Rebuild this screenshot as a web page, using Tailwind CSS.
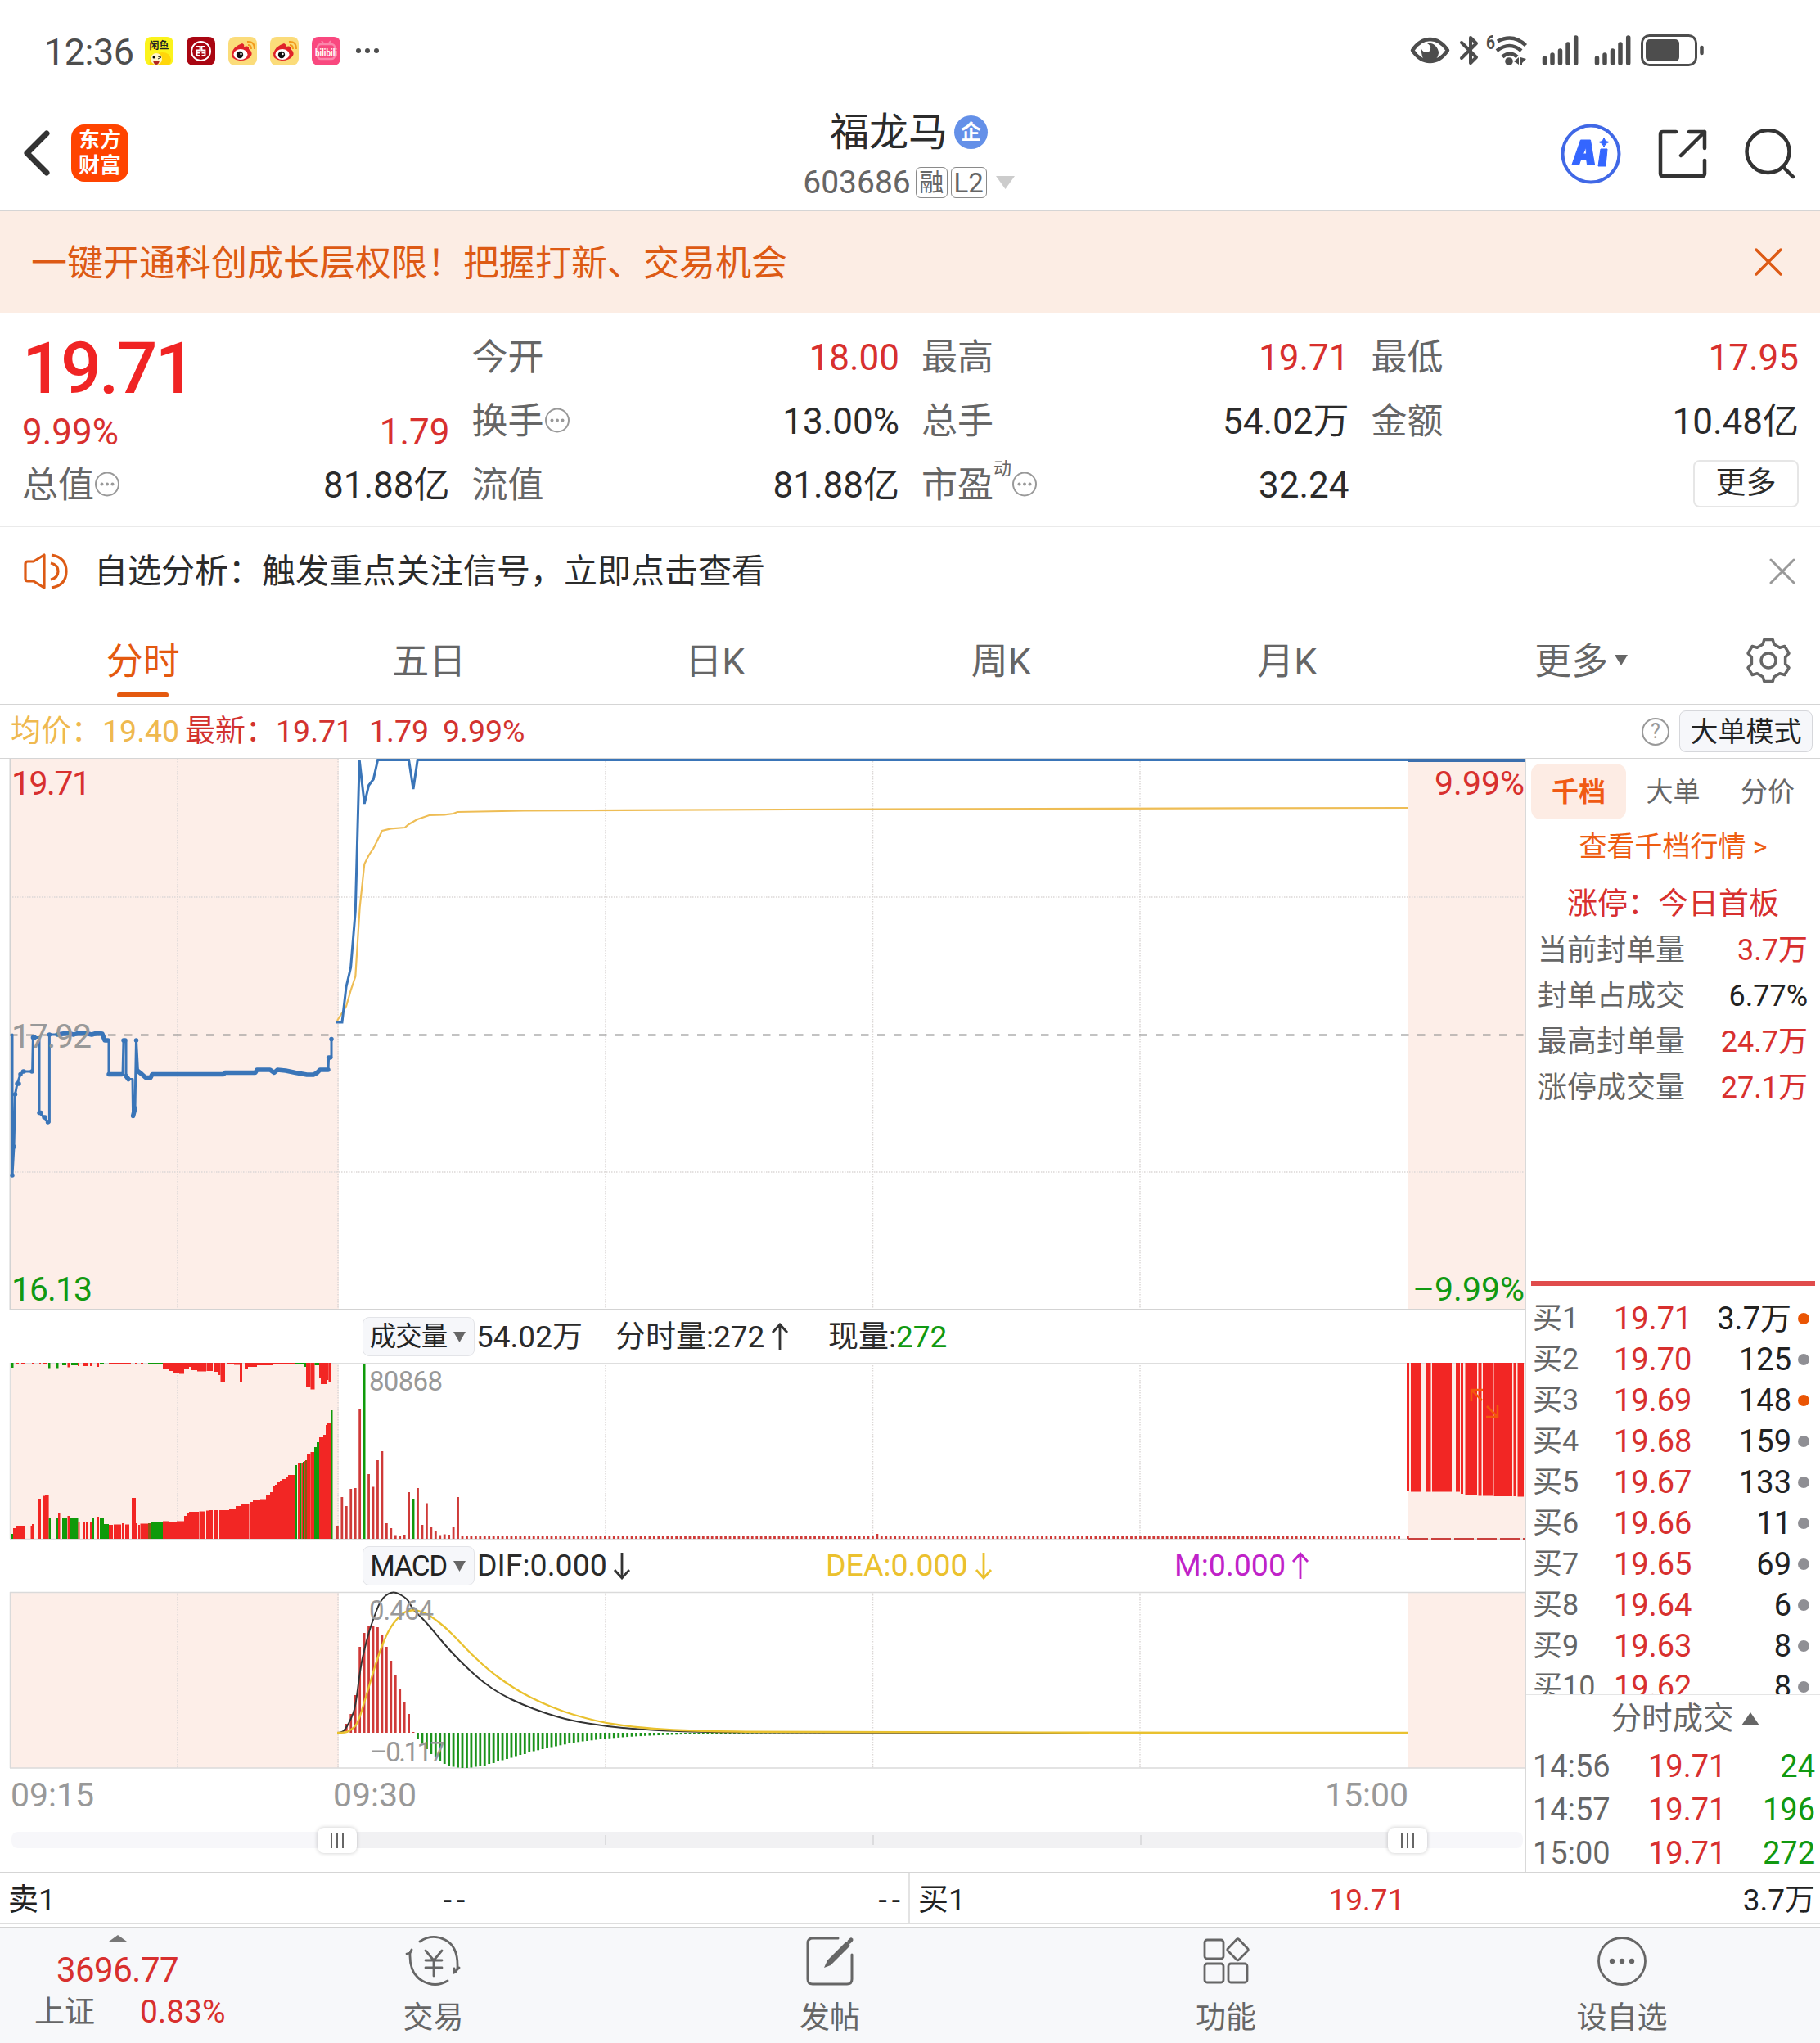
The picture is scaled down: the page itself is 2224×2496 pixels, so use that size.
<!DOCTYPE html>
<html lang="zh-CN">
<head>
    <meta charset="UTF-8">
    <meta name="viewport" content="width=device-width, initial-scale=1.0">
    <title>福龙马 603686</title>
    <script src="https://cdn.jsdelivr.net/npm/@tailwindcss/browser@4"></script>
</head>
<body class="w-[2224px] h-[2496px] overflow-hidden bg-white font-[Roboto,'Noto_Sans_CJK_SC',sans-serif] leading-none text-[#2b2b2b] whitespace-nowrap">

    <!-- 状态栏 -->
    <div class="h-[124px] flex items-center justify-between pl-[54px] pr-[142px]">
        <div class="flex items-center">
            <span class="w-[123px] pt-0.5 text-[45px] tracking-[-0.500px] text-[#4d4d4d]">12:36</span>
            <div class="flex gap-4">
                <svg class="size-[35px] overflow-visible" viewBox="0 0 35 35">
                    <rect width="35" height="35" rx="8" fill="#fbf31c"/>
                    <text x="17.5" y="15" font-size="12" font-weight="700" text-anchor="middle" fill="#222">闲鱼</text>
                    <path d="M6 35Q4 20 15 20Q30 16 32 28Q32 33 28 35Z" fill="#ffd60a"/>
                    <circle cx="14" cy="27" r="7" fill="#fff6c8"/>
                    <circle cx="11" cy="25" r="1.5"/><path d="M16 24l4 1-4 2" stroke="#222" fill="none"/>
                    <path d="M10 29h8q-1 5-4 5t-4-5z" fill="#b3261e"/>
                </svg>
                <svg class="size-[35px]" viewBox="0 0 35 35">
                    <rect width="35" height="35" rx="8" fill="#a90612"/>
                    <circle cx="17.500" cy="17.500" r="11.500" fill="none" stroke="#fff" stroke-width="2"/>
                    <path d="M12 12h4.500v4.500H12.500V23h4M23 12h-4.500v4.500h4V23h-4M12.500 19.500h4M18.500 19.500h4" fill="none" stroke="#fff" stroke-width="1.800"/>
                </svg>
                <svg class="size-[35px]" viewBox="0 0 35 35">
                    <rect width="35" height="35" rx="8" fill="#fbdc7a"/>
                    <path d="M4 20Q7 11 17 8Q20 9 19 12Q26 10 25 15Q30 18 28 23Q24 29 14 29Q3 28 4 20Z" fill="#e0222a"/>
                    <ellipse cx="15" cy="21.500" rx="8.500" ry="6.500" fill="#fff"/>
                    <circle cx="14" cy="22" r="4.200" fill="#111"/><circle cx="15.500" cy="21" r="1.200" fill="#fff"/>
                    <path d="M24 10q4 0 4 5M23 6q9-1 9 9" fill="none" stroke="#f29a1c" stroke-width="2"/>
                </svg>
                <svg class="size-[35px]" viewBox="0 0 35 35">
                    <rect width="35" height="35" rx="8" fill="#fbdc7a"/>
                    <path d="M4 20Q7 11 17 8Q20 9 19 12Q26 10 25 15Q30 18 28 23Q24 29 14 29Q3 28 4 20Z" fill="#e0222a"/>
                    <ellipse cx="15" cy="21.500" rx="8.500" ry="6.500" fill="#fff"/>
                    <circle cx="14" cy="22" r="4.200" fill="#111"/><circle cx="15.500" cy="21" r="1.200" fill="#fff"/>
                    <path d="M24 10q4 0 4 5M23 6q9-1 9 9" fill="none" stroke="#f29a1c" stroke-width="2"/>
                </svg>
                <svg class="size-[35px] overflow-visible" viewBox="0 0 35 35">
                    <rect width="35" height="35" rx="8" fill="#f9487f"/>
                    <rect x="7" y="9" width="21" height="18" rx="4" fill="none" stroke="#fb86ab" stroke-width="2.500"/>
                    <path d="M12 5l3 4M23 5l-3 4" stroke="#fb86ab" stroke-width="2"/>
                    <text x="17.500" y="24" font-size="13" font-weight="700" text-anchor="middle" textLength="27" lengthAdjust="spacingAndGlyphs" fill="#fff">bilibili</text>
                </svg>
            </div>
            <div class="ml-[19px] flex gap-[5px]">
                <i class="size-[6px] rounded-full bg-[#4d4d4d]"></i>
                <i class="size-[6px] rounded-full bg-[#4d4d4d]"></i>
                <i class="size-[6px] rounded-full bg-[#4d4d4d]"></i>
            </div>
        </div>
        <svg class="w-[358px] h-10 overflow-visible" viewBox="1724 42 358 40" fill="none" stroke="#4d4d4d">
            <path d="M1726 61.500Q1735 48 1747.500 48T1769 61.500Q1760 75 1747.500 75T1726 61.500Z" stroke-width="4.500" stroke-linejoin="round"/>
            <path d="M1744 53q6-1 10 3t4 9q-1 9-10.500 10t-10.500-11v-4q2 4 6 4t5-4-4-7z" fill="#4d4d4d" stroke="none"/>
            <path d="M1786 52l18 18-7 7V46l7 7-18 18" stroke-width="4" stroke-linejoin="round" stroke-linecap="round"/>
            <text x="1816" y="60" font-size="23" font-weight="700" textLength="11" lengthAdjust="spacingAndGlyphs" fill="#4d4d4d" stroke="none">6</text>
            <path d="M1830 50.500q19-10 34.500 5M1829 62q16-12 30 0M1836 69.500q9-8 18 0" stroke-width="4.500"/>
            <circle cx="1844" cy="75" r="4.800" fill="#4d4d4d" stroke="none"/>
            <path d="M1850 75l6-5v9zM1858 70v9h2v-2l5-5z" fill="#4d4d4d" stroke="none"/>
            <path d="M1887.500 71v6M1897 67v10M1906.500 62v15M1916 54v23M1925.700 46v31M1951.500 71v6M1961 67v10M1970.500 62v15M1980 54v23M1989.700 46v31" stroke-width="5.500" stroke-linecap="round"/>
            <rect x="2006.500" y="43.500" width="66" height="36" rx="9" stroke-width="3"/>
            <rect x="2011" y="48" width="41" height="27" rx="5" fill="#4d4d4d" stroke="none"/>
            <path d="M2079.500 58v7" stroke-width="4.500" stroke-linecap="round"/>
        </svg>
    </div>

    <!-- 标题栏 -->
    <header class="h-[134px] grid grid-cols-3 border-b border-[#d5d5d5]">
        <div class="flex items-center pl-7 pb-2">
            <svg class="w-[34px] h-[58px]" viewBox="0 0 34 58"><path d="M29 5L5 29l24 24" fill="none" stroke="#333" stroke-width="7" stroke-linecap="round" stroke-linejoin="round"/></svg>
            <div class="ml-[25px] size-[70px] rounded-[16px] bg-[#ff4400] flex flex-col items-center justify-center gap-[5px] text-white text-[26px] font-bold">
                <span>东方</span><span>财富</span>
            </div>
        </div>
        <div class="flex flex-col items-center pt-1 pr-[3px]">
            <div class="h-[64px] pt-[3px] flex items-center gap-2">
                <h1 class="text-[48px]">福龙马</h1>
                <span class="size-[41px] rounded-full bg-[#6490e8] text-white text-[25px] font-bold flex items-center justify-center">企</span>
            </div>
            <div class="h-[62px] flex items-center text-[#666]">
                <span class="text-[39px]">603686</span>
                <span class="ml-1.5 w-[39px] h-[38px] rounded-md border-[1.5px] border-[#8a8a8a] text-[30px] flex items-center justify-center">融</span>
                <span class="ml-1 w-[44px] h-[38px] rounded-md border-[1.5px] border-[#8a8a8a] text-[33px] flex items-center justify-center">L2</span>
                <svg class="ml-[11px] w-[23px] h-4" viewBox="0 0 23 16"><path d="M0 0h23L11.500 16z" fill="#ccc"/></svg>
            </div>
        </div>
        <div class="flex items-center justify-end gap-[45px] pr-[31px] pb-1.5">
            <svg class="size-[74px]" viewBox="0 0 74 74">
                <circle cx="37" cy="37" r="34.500" fill="none" stroke="#4068e6" stroke-width="4"/>
                <path d="M14 50L24.500 20h12L41.500 50h-9l-.8-6h-7l-2 6zM27.500 37h4l-.6-8z" fill="#3466ff" stroke="#3466ff" stroke-linejoin="round"/>
                <path d="M49 31h8l-2 21h-9zM53 17q1 5 6 5.500-5 1-6 6-1-5-6-6 5-.5 6-5.500z" fill="#3466ff" stroke="#3466ff" stroke-linejoin="round"/>
            </svg>
            <svg class="size-[60px]" viewBox="0 0 60 60" fill="none" stroke="#333" stroke-width="4.500" stroke-linecap="round" stroke-linejoin="round">
                <path d="M22 3H6Q3 3 3 6v48q0 3 3 3h48q3 0 3-3V38M38 3h19v20M57 3L28 32"/>
            </svg>
            <svg class="size-[62px]" viewBox="0 0 62 62" fill="none" stroke="#333" stroke-width="4.500" stroke-linecap="round">
                <circle cx="29.500" cy="28" r="26"/><path d="M48 47l12 12"/>
            </svg>
        </div>
    </header>

    <!-- 开通提示 -->
    <div class="h-[125px] flex items-center justify-between bg-[#fcede4] pl-[38px] pr-[46px] text-[#dd5a14]">
        <p class="pt-0.5 text-[44px]">一键开通科创成长层权限！把握打新、交易机会</p>
        <svg class="size-[34px] mb-0.5" viewBox="0 0 34 34"><path d="M2 2l30 30M32 2L2 32" stroke="#dd5a14" stroke-width="3.500" stroke-linecap="round"/></svg>
    </div>

    <!-- 行情数据 -->
    <section class="h-[261px] grid grid-cols-4 gap-x-[27px] pl-[27px] pr-[26px] pt-[15px] border-b border-[#eaeaea] text-[44px]">
        <div>
            <div class="h-[104px] flex items-center text-[88px] font-medium text-[#f02424] tracking-[-3px]">19.71</div>
            <div class="h-[52px] flex items-center justify-between text-[#d8302e]"><span>9.99%</span><span>1.79</span></div>
            <div class="h-[78px] flex items-center justify-between">
                <span class="flex items-center text-[#666]">总值<svg class="w-[32px] h-[32px]" viewBox="0 0 32 32"><use href="#more"/></svg></span><span>81.88亿</span>
            </div>
        </div>
        <div>
            <div class="h-[78px] flex items-center justify-between"><span class="text-[#666]">今开</span><span class="text-[#d8302e]">18.00</span></div>
            <div class="h-[78px] flex items-center justify-between">
                <span class="flex items-center text-[#666]">换手<svg class="w-[32px] h-[32px]" viewBox="0 0 32 32"><use href="#more"/></svg></span><span>13.00%</span>
            </div>
            <div class="h-[78px] flex items-center justify-between"><span class="text-[#666]">流值</span><span>81.88亿</span></div>
        </div>
        <div>
            <div class="h-[78px] flex items-center justify-between"><span class="text-[#666]">最高</span><span class="text-[#d8302e]">19.71</span></div>
            <div class="h-[78px] flex items-center justify-between"><span class="text-[#666]">总手</span><span>54.02万</span></div>
            <div class="h-[78px] flex items-center justify-between">
                <span class="flex items-center text-[#666]">市盈<span class="text-[22px] pb-10">动</span><svg class="w-[32px] h-[32px]" viewBox="0 0 32 32"><use href="#more"/></svg></span><span>32.24</span>
            </div>
        </div>
        <div>
            <div class="h-[78px] flex items-center justify-between"><span class="text-[#666]">最低</span><span class="text-[#d8302e]">17.95</span></div>
            <div class="h-[78px] flex items-center justify-between"><span class="text-[#666]">金额</span><span>10.48亿</span></div>
            <div class="h-[78px] pb-1 flex items-center justify-end">
                <button class="w-[129px] h-[58px] rounded-lg border-2 border-[#e6e6e6] text-[37px] pb-0.5">更多</button>
            </div>
        </div>
    </section>

    <!-- 自选分析 -->
    <div class="h-[109px] flex items-center border-b border-[#d5d5d5] pl-[29px] pr-[30px]">
        <svg class="w-[55px] h-[46px]" viewBox="0 0 55 46" fill="none" stroke="#dd5a14" stroke-width="3.200" stroke-linejoin="round">
            <path d="M25 3v40L12 35H5q-3 0-3-3V14q0-3 3-3h7zM34 3q18 3 18 20T34 43M33 13q9 2 9 10t-9 10"/>
        </svg>
        <p class="ml-[31px] flex-1 text-[41px]">自选分析：触发重点关注信号，立即点击查看</p>
        <svg class="size-[32px]" viewBox="0 0 32 32"><path d="M2 2l28 28M30 2L2 30" stroke="#999" stroke-width="3" stroke-linecap="round"/></svg>
    </div>

    <!-- 周期切换 -->
    <nav class="h-[108px] flex border-b border-[#d5d5d5] text-[45px] text-[#666]">
        <div class="w-[349.5px] flex flex-col items-center pt-[33px] text-[#e4590f]">分时<i class="mt-[15px] w-[63px] h-[6px] rounded-full bg-[#e4590f]"></i></div>
        <div class="w-[349.5px] text-center pt-[33px]">五日</div>
        <div class="w-[349.5px] text-center pt-[33px]">日K</div>
        <div class="w-[349.5px] text-center pt-[33px]">周K</div>
        <div class="w-[349.5px] text-center pt-[33px]">月K</div>
        <div class="w-[369.500px] flex justify-center pt-[33px] gap-2">更多<svg class="mt-[14px] w-4 h-[13px]" viewBox="0 0 16 13"><path d="M0 0h16L8 13z" fill="#666"/></svg></div>
        <svg class="mt-[26px] ml-[16px] size-[56px]" viewBox="-28 -28 56 56" fill="none" stroke="#666" stroke-width="3.500" stroke-linejoin="round">
            <path d="M-6.800-19.900L-5.200-25.500H5.200L6.800-19.900L13.800-15.800L19.800-17.500L25-8.800L20.600-4V4L25 8.800L19.800 17.500L13.800 15.800L6.800 19.900L5.200 25.500H-5.200L-6.800 19.900L-13.800 15.800L-19.800 17.500L-25 8.800L-20.600 4V-4L-25-8.800L-19.800-17.500L-13.800-15.800Z"/>
            <circle r="9"/>
        </svg>
    </nav>

    <!-- 均价 -->
    <div class="h-[66px] flex items-center border-b border-[#d5d5d5] pl-[13px] pr-[9px] text-[37.500px] text-[#d3332f]">
        <span class="w-[112px] text-[37px] text-[#efb94f]">均价：</span>
        <span class="w-[101px] text-[#efb94f]">19.40</span>
        <span class="w-[111px] text-[37px]">最新：</span>
        <span class="w-[114px]">19.71</span>
        <span class="w-[90px]">1.79</span>
        <span class="flex-1">9.99%</span>
        <span class="size-[34px] rounded-full border-[2.500px] border-[#999] text-[25px] text-[#999] flex items-center justify-center">?</span>
        <button class="ml-3 w-[163px] h-[51px] rounded-lg border-[1.500px] border-[#d6d7db] bg-[#f6f7fa] text-[34px] text-[#222]">大单模式</button>
    </div>

    <main class="h-[1361px] flex border-b border-[#d5d5d5]">
        <!-- 左侧图表 -->
        <div class="w-[1865px] border-r-2 border-[#d9d9d9]">
            <svg class="block w-[1863px] h-[674px]" viewBox="0 927 1863 674">
                <path d="M12 927h402v673H12zM1721 927h142v673h-142z" fill="#fdeee8"/>
                <path d="M217 927v673M413 927v673M740 927v673M1066.500 927v673M1393 927v673M12 1096h1851M12 1432h1851" stroke="#dcd8d6" stroke-width="1.500" stroke-dasharray="1.500 1.500"/>
                <path d="M12.500 927v673M12 1600h1851" stroke="#d3d3d3" stroke-width="2"/>
                <path d="M12 1264.500H1863" stroke="#888" stroke-width="1.800" stroke-dasharray="9.500 10.500"/>
                <g fill="none" stroke="#3a75b8" stroke-linejoin="round" stroke-linecap="round">
                    <path stroke-width="3" d="M15 1264V1436L17 1401L18.500 1337L21 1324L25 1312.500L28.500 1309H39.600L40.400 1267.500H48V1359.600L54 1365L58.500 1371H60.400V1264H126L128 1271L133 1272V1312.500H150L151 1271L154 1273V1314.500L157 1318.500H162L162.600 1363.500L165 1354L166.500 1271L168.500 1308.500L173.500 1312.500M391 1307H401L401.600 1292H405V1269.500"/>
                    <path stroke-width="5.500" d="M15 1436v0M17 1401v0M18.500 1337v0M21 1324h2M25 1312.500v0M28.500 1309h.5M39 1309v0M40.400 1267.500h2M48 1359.500h2M54 1365h1M58.500 1371v0M60.400 1264v0M70 1264L82 1262L90 1264L96 1262L104 1262L112 1264L119 1262L125 1263L128 1271H132M133 1312.500H149M151 1271h2M154 1314.500L157 1318.500M162.600 1363.500L165 1354M166.500 1271v0M168.500 1308.500L173.500 1312.500L178 1316.500H184L186 1312.500H273L275 1310.500H312L314 1307H330L335 1310.500L339 1307L349 1308L361 1310.500L375 1313H383L387 1311L391 1307H401M401.600 1292h2M405 1269.500v0"/>
                </g>
                <path fill="none" stroke="#eebd55" stroke-width="2.200" d="M412 1247L418 1237.500L423 1229.500L428.600 1210L434.300 1193L439.600 1109L445.300 1055.500L450.600 1045L456.300 1036.500L467 1015L477.600 1012.400L494.700 1011L499.600 1007L510 1001L524.500 996L543 995.400L554 994L559 992L640 990.500L1070 988.500L1721 987"/>
                <path fill="none" stroke="#3a75b8" stroke-width="3" d="M411 1249H418L423 1206L428.600 1182L434.300 1113L439.200 928.500L445.300 982L450.600 959.500L456.300 952L461.600 928.500H499.600L505 964L510.200 928.500H1863"/>
                <path d="M1720 929h143" stroke="#3a6fae" stroke-width="4"/>
                <g font-size="41">
                    <text x="14" y="971" textLength="97" fill="#d8302e">19.71</text>
                    <text x="14" y="1280" textLength="98" fill="#999">17.92</text>
                    <text x="14" y="1589" textLength="99" fill="#119911">16.13</text>
                    <text x="1863" y="971" fill="#d8302e" text-anchor="end">9.99%</text>
                    <text x="1863" y="1589" fill="#119911" text-anchor="end">–9.99%</text>
                </g>
            </svg>

            <div class="h-[64px] flex items-center pl-[443px] text-[37px]">
                <button class="w-[137px] h-[48px] rounded-lg border border-[#e3e4e8] bg-[#f6f7fa] flex items-center justify-center gap-2 text-[32.500px] tracking-[-1px] text-[#222] pr-0.5">成交量<svg class="w-[15px] h-[13px]" viewBox="0 0 15 13"><path d="M0 0h15L7.500 13z" fill="#666"/></svg></button>
                <span class="ml-0.5 w-[170px]">54.02万</span>
                <span class="w-[260px] flex items-center">分时量:272<svg class="ml-[7px] w-6 h-[34px]" viewBox="0 0 24 34"><path d="M12 33V2M3 12l9-10 9 10" fill="none" stroke="#333" stroke-width="2.800"/></svg></span>
                <span>现量:<span class="text-[#119911]">272</span></span>
            </div>

            <svg class="block w-[1863px] h-[217px]" viewBox="0 1665 1863 217">
                <path d="M12 1665h402v215H12zM1721 1665h142v215h-142z" fill="#fdeee8"/>
                <path d="M217 1665v215M413 1665v215M740 1665v215M1066.500 1665v215M1393 1665v215" stroke="#dcd8d6" stroke-width="1.500" stroke-dasharray="1.500 1.500"/>
                <path d="M12 1665.500h1851M12.500 1665v215M12 1880.500h1851" fill="none" stroke="#dedede" stroke-width="1.500"/>
                <g id="volume"></g>
                <path d="M1719 1665h3v156h-3zM1724 1665h12.500v157.500h-12.500zM1743 1665h5.500v157.500h-5.500zM1750 1665h24v157.500h-24zM1779 1665h5v157.500h-5zM1785 1665h3v160h-3zM1790.500 1665h14.500v162h-14.500zM1806.500 1665h4v162.500h-4zM1812 1665h12v162.500h-12zM1825.500 1665h22.500v163h-22.500zM1849.500 1665h3.500v163h-3.500zM1854.500 1665h7.500v163.500h-7.500z" fill="#f22624"/>
                <path d="M1721 1880h142" stroke="#c9403e" stroke-width="2" stroke-dasharray="24 4"/>
                <path d="M1798 1712v-14h14M1798 1698l13 13M1830 1717v14h-14M1830 1731l-13-13" fill="none" stroke="#f2590c" stroke-width="2.500"/>
                <text x="451" y="1699" font-size="33" textLength="90" fill="#999">80868</text>
            </svg>

            <div class="h-[62px] flex items-center pl-[443px] text-[37.500px]">
                <button class="w-[137px] h-[48px] rounded-lg border border-[#e3e4e8] bg-[#f6f7fa] flex items-center justify-center gap-2 text-[35px] tracking-[-1.500px] text-[#222] pr-0.5">MACD<svg class="w-[15px] h-[13px]" viewBox="0 0 15 13"><path d="M0 0h15L7.500 13z" fill="#666"/></svg></button>
                <span class="ml-[3px] w-[426px] flex items-center">DIF:0.000<svg class="ml-1.5 w-6 h-[34px]" viewBox="0 0 24 34"><path d="M12 1v31M3 22l9 10 9-10" fill="none" stroke="#333" stroke-width="2.800"/></svg></span>
                <span class="w-[426px] flex items-center text-[#ebc12e]">DEA:0.000<svg class="ml-[7px] w-6 h-[34px]" viewBox="0 0 24 34"><path d="M12 1v31M3 22l9 10 9-10" fill="none" stroke="#ebc12e" stroke-width="2.800"/></svg></span>
                <span class="flex items-center text-[#c022c8]">M:0.000<svg class="ml-1.5 w-6 h-[34px]" viewBox="0 0 24 34"><path d="M12 33V2M3 12l9-10 9 10" fill="none" stroke="#c022c8" stroke-width="2.800"/></svg></span>
            </div>

            <svg class="block w-[1863px] h-[218px]" viewBox="0 1944 1863 218">
                <path d="M12 1945h402v215H12zM1721 1945h142v215h-142z" fill="#fdeee8"/>
                <path d="M217 1945v215M413 1945v215M740 1945v215M1066.500 1945v215M1393 1945v215" stroke="#dcd8d6" stroke-width="1.500" stroke-dasharray="1.500 1.500"/>
                <path d="M12 1945.500h1851M12.500 1945v215M12 2160h1851" fill="none" stroke="#dadada" stroke-width="1.500"/>
                <g id="macd"></g>
                <path id="dif" fill="none" stroke="#333" stroke-width="2"/>
                <path id="dea" fill="none" stroke="#e9c12f" stroke-width="2.300"/>
                <text x="451" y="1979" font-size="33" textLength="79" fill="#999">0.464</text>
                <text x="452" y="2152" font-size="33" textLength="92" fill="#999">–0.117</text>
            </svg>

            <div class="h-[60px] flex items-center pl-[13px] pt-0.5 text-[41px] text-[#999]">
                <span class="w-[394px]">09:15</span>
                <span class="flex-1">09:30</span>
                <span class="pr-[142px]">15:00</span>
            </div>

            <div class="relative mt-4 ml-[14px] w-[1847px] h-5 rounded-[8px] bg-[#f7f7fa] flex">
                <div class="ml-[399px] w-[1308px] flex bg-[#f1f1f3]">
                    <i class="mt-1 h-3 w-[327.500px] border-r-2 border-[#dcdcde]"></i>
                    <i class="mt-1 h-3 w-[327px] border-r-2 border-[#dcdcde]"></i>
                    <i class="mt-1 h-3 w-[327px] border-r-2 border-[#dcdcde]"></i>
                </div>
                <div class="absolute left-[374px] -top-[5px] w-12 h-[31px] rounded-lg bg-white shadow-[0_0_5px_rgba(0,0,0,0.22)] flex items-center justify-center gap-[5px]">
                    <i class="w-[2px] h-[18px] bg-[#666]"></i><i class="w-[2px] h-[18px] bg-[#666]"></i><i class="w-[2px] h-[18px] bg-[#666]"></i>
                </div>
                <div class="absolute left-[1682px] -top-[5px] w-12 h-[31px] rounded-lg bg-white shadow-[0_0_5px_rgba(0,0,0,0.22)] flex items-center justify-center gap-[5px]">
                    <i class="w-[2px] h-[18px] bg-[#666]"></i><i class="w-[2px] h-[18px] bg-[#666]"></i><i class="w-[2px] h-[18px] bg-[#666]"></i>
                </div>
            </div>
        </div>

        <!-- 右侧盘口 -->
        <aside class="w-[359px] text-[#666]">
            <div class="mt-1.5 ml-1.5 flex text-[33px]">
                <span class="w-[116px] h-[68px] rounded-xl bg-[#fdece4] flex items-center justify-center font-bold text-[#f05a14]">千档</span>
                <span class="w-[115px] h-[68px] flex items-center justify-center">大单</span>
                <span class="w-[116px] h-[68px] flex items-center justify-center">分价</span>
            </div>
            <p class="h-[66px] flex items-center justify-center text-[34px] text-[#ee5d12]">查看千档行情 &gt;</p>
            <p class="h-[66px] pt-2 flex items-center justify-center text-[37px] text-[#d8302e]">涨停：今日首板</p>
            <div id="seal" class="h-[432px] px-[15px] pl-[14px] text-[36px]"></div>
            <div class="ml-1.5 w-[347px] h-1.5 bg-[#e04c4c]"></div>
            <div id="bids" class="h-[500px] pt-[15px] overflow-hidden border-b border-[#e5e5e5]"></div>
            <div class="h-[60px] flex items-center justify-center gap-[9px] pb-0.5 pl-[29px] text-[37.500px]">分时成交<svg class="w-[22px] h-4" viewBox="0 0 22 16"><path d="M0 16h22L11 0z" fill="#666"/></svg></div>
            <div id="deals" class="text-[38px]"></div>
        </aside>
    </main>

    <!-- 买一卖一 -->
    <div class="h-[63px] flex border-b-2 border-[#dedede] text-[37px] text-[#222]">
        <div class="w-1/2 pt-[5px] grid grid-cols-3 items-center pl-[10px] pr-1 border-r-2 border-[#e3e3e3]">
            <span>卖1</span><span class="text-center tracking-[6px]">--</span><span class="text-right tracking-[6px]">--</span>
        </div>
        <div class="w-1/2 pt-[5px] grid grid-cols-3 items-center pl-[10px] pr-1.5">
            <span>买1</span><span class="text-center text-[#d8302e]">19.71</span><span class="text-right">3.7万</span>
        </div>
    </div>

    <!-- 底部导航 -->
    <footer class="mt-[3px] h-[142px] flex border-t-2 border-[#d3d3d3] bg-[#f7f8fa] text-[37px] text-[#666]">
        <div class="w-[287px] flex flex-col items-center pt-2">
            <svg class="w-[22px] h-[8px]" viewBox="0 0 22 8"><path d="M0 8h22L11 0z" fill="#777"/></svg>
            <span class="mt-3.5 text-[42px] text-[#d8302e] tracking-[-0.500px]">3696.77</span>
            <div class="mt-[11px] w-full flex items-center pl-[42px]"><span class="w-[129px]">上证</span><span class="text-[39px] text-[#d8302e]">0.83%</span></div>
        </div>
        <div class="w-[485px] flex flex-col items-center pt-2">
            <svg class="w-[70px] h-[64px]" viewBox="0 0 70 64" fill="none" stroke="#666" stroke-width="2.800" stroke-linecap="round">
                <path d="M18 8Q33-2 49 6T64 40Q63 45 60 46V41M66 40l-6 6M52 56Q37 65 21 56T6 22L2 23M6 22l2-4M25 19l10 12 10-12M35 31v19M25 31h20M25 40h20"/>
            </svg>
            <span class="mt-[19px]">交易</span>
        </div>
        <div class="w-[484px] flex flex-col items-center pt-2">
            <svg class="w-[60px] h-[64px]" viewBox="0 0 60 64" fill="none" stroke="#666" stroke-width="3" stroke-linecap="round">
                <path d="M40 4H9Q3 4 3 10v44q0 6 6 6h42q6 0 6-6V24"/>
                <path d="M23 40l4-9 22-22q2-1 4 1t1 4L31 37z" fill="#666" stroke="none"/><path d="M54 8l2-2" stroke-width="5"/>
            </svg>
            <span class="mt-[19px]">发帖</span>
        </div>
        <div class="w-[484px] flex flex-col items-center pt-2">
            <svg class="w-[60px] h-[64px]" viewBox="0 0 60 64" fill="none" stroke="#666" stroke-width="2.800" stroke-linejoin="round">
                <rect x="4" y="6" width="23" height="23" rx="3"/><rect x="4" y="35" width="23" height="23" rx="3"/><rect x="33" y="35" width="23" height="23" rx="3"/>
                <path d="M43 5.500q1.500-1.500 3 0l10.500 11q1.500 1.500 0 3L46 30q-1.500 1.500-3 0L32.500 19.500q-1.500-1.500 0-3z"/>
            </svg>
            <span class="mt-[19px]">功能</span>
        </div>
        <div class="w-[484px] flex flex-col items-center pt-2">
            <svg class="size-[64px]" viewBox="0 0 64 64"><circle cx="32" cy="32" r="28.500" fill="none" stroke="#666" stroke-width="2.800"/><g fill="#666"><circle cx="20" cy="32" r="3.200"/><circle cx="32" cy="32" r="3.200"/><circle cx="44" cy="32" r="3.200"/></g></svg>
            <span class="mt-[19px]">设自选</span>
        </div>
    </footer>

    <svg class="hidden">
        <g id="more"><circle cx="16" cy="14.500" r="14" fill="none" stroke="#999" stroke-width="2"/><circle cx="9.500" cy="14.500" r="2" fill="#999"/><circle cx="16" cy="14.500" r="2" fill="#999"/><circle cx="22.500" cy="14.500" r="2" fill="#999"/></g>
    </svg>

    <script>
        const RED = '#f22624', DRED = '#cf3a38', GREEN = '#0f9a0a';
        const $ = id => document.getElementById(id);
        const rect = (x, y, w, h, c) => `<rect x="${x}" y="${y}" width="${w}" height="${h}" fill="${c}"/>`;

        // 封单数据
        $('seal').innerHTML = [
            ['当前封单量', '3.7万', 'text-[#d8302e]'],
            ['封单占成交', '6.77%', 'text-[#222]'],
            ['最高封单量', '24.7万', 'text-[#d8302e]'],
            ['涨停成交量', '27.1万', 'text-[#d8302e]']
        ].map(r => `<div class="h-[56px] flex items-center justify-between"><span>${r[0]}</span><span class="${r[2]}">${r[1]}</span></div>`).join('');

        // 买盘十档
        $('bids').innerHTML = ['3.7万', 125, 148, 159, 133, 11, 69, 6, 8, 8].map((q, i) => `
            <div class="h-[50px] flex items-center pl-2 pr-[13px] text-[38px]">
                <span class="w-[99px] text-[36px]">买${i + 1}</span>
                <span class="text-[#d8302e]">${(19.71 - i / 100).toFixed(2)}</span>
                <span class="flex-1 text-right text-[#222]">${q}</span>
                <i class="ml-2 size-[14px] rounded-full ${i === 0 || i === 2 ? 'bg-[#ea5504]' : 'bg-[#8f8f94]'}"></i>
            </div>`).join('');

        // 分时成交
        $('deals').innerHTML = [['14:56', 24], ['14:57', 196], ['15:00', 272]].map(r => `
            <div class="h-[53px] flex items-center pl-2 pr-[6px]">
                <span class="w-[141px]">${r[0]}</span>
                <span class="text-[#d8302e]">19.71</span>
                <span class="flex-1 text-right text-[#119911]">${r[1]}</span>
            </div>`).join('');

        // 集合竞价量 [x0, x1, 高度, 颜色]
        const auction = [
            [13.5, 16, 6, 1], [16, 20, 13], [20, 30, 16], [37.5, 40, 16], [39, 42, 18], [47, 50, 49], [53, 55, 52.5], [55, 59.6, 53.5],
            [59.6, 62, 25, 1], [68.5, 71, 25, 1], [71, 73.5, 32], [76, 82, 26, 1], [82.5, 85.5, 28], [86, 91, 26, 1], [91, 95.5, 25, 1],
            [95.5, 97.5, 20], [102, 104, 20.5], [105, 107, 20], [110, 112, 20], [112, 115, 26, 1], [118, 121, 27], [122, 127, 26, 1], [127, 133, 18, 1],
            [133, 138, 17], [139, 148, 17.5], [149, 152, 19], [153, 158, 17.5], [161, 166, 50], [166, 168, 19], [169, 171, 17], [171.5, 181, 18.5],
            [181, 185, 19, 2], [185, 191, 20, 1], [191, 195, 21, 1], [196, 199, 21, 1], [199, 206, 21.5], [206, 216, 20.5], [216, 225, 21.5],
            [225, 229, 28], [229, 231, 31], [231, 243, 33], [243.5, 251, 33.5], [252, 255, 34.5], [255.5, 260, 35], [261, 267, 35], [268, 280, 35], [280, 288, 36],
            [288, 294, 40], [294, 302, 42], [302, 304.5, 43], [305, 309, 45], [309, 318, 47], [318, 325, 48.5], [325, 330, 53], [330, 333, 57],
            [333, 336, 64], [336, 339, 66], [339, 342, 69], [342, 345, 71], [345, 349, 73], [349, 352, 76], [352, 361, 78], [361, 363, 90, 1],
            [364, 367, 92], [367, 368.5, 93, 1], [368.5, 370, 93], [370, 371.5, 94, 1], [371.5, 373, 95], [373, 375, 96, 2], [375, 379.5, 103], [379.5, 384, 106],
            [384, 387, 112, 1], [387, 390, 118, 1], [390, 395, 124], [395, 398, 127], [398, 400, 139], [400, 404, 141], [404, 406.5, 157, 1]
        ];
        // 未匹配量，自上而下
        const unmatched = [
            [13.5, 16.5, 6, 1], [20, 23, 2], [26, 30, 2], [39, 41, 1.5], [48, 50, 1.5], [53, 58, 2], [59, 61.5, 6.5, 1], [68.5, 71.5, 6.5, 1], [76, 81, 3, 1],
            [82.5, 85, 5.5], [87, 95, 3, 1], [95, 97, 4], [102, 107, 4], [110, 113, 4], [118, 121, 5], [122, 127, 1.5, 1], [133, 160, 1], [165, 168, 2], [172, 175, 1.5],
            [181, 199, 1, 1], [199, 206, 8], [206, 212, 10], [212, 219, 12.5], [219, 225, 13.5], [225, 231, 7], [231, 234, 5], [234, 241, 9],
            [241, 252, 10.5], [252.500, 260, 10], [261, 267, 11], [267, 269.5, 15], [269.5, 275, 23], [278, 286, 1], [286, 293, 2.5], [293, 296, 24],
            [299, 303, 7.5], [303, 314, 5], [314, 333, 3], [333, 360, 2], [360, 372, 1.5, 1], [372, 374, 5, 1], [374, 379.5, 30], [379.5, 384.5, 32.5],
            [384.5, 390, 3, 1], [390, 392, 18], [392, 399, 26], [399, 401.5, 21], [401.5, 404.5, 24]
        ];
        const pick = k => k === 1 ? GREEN : k === 2 ? '#8a5a14' : RED;
        let vol = auction.map(b => rect(b[0], 1880 - b[2], b[1] - b[0], b[2], pick(b[3]))).join('')
            + unmatched.map(b => rect(b[0], 1665, b[1] - b[0], b[2], pick(b[3]))).join('');

        // 每分钟成交量
        const minute = [16, 51, 40, 61, 62, 158, 214, 79, 63.5, 96, 107, 19, 13, 4.5, 3, 5, 57, 49, 62, 17, 43.5, 14, 10, 4.5, 5.5, 5, 15, 51];
        for (let i = 0; i <= 240; i++) {
            if (i === 239) continue;
            const h = minute[i] || (i === 121 ? 6 : 3);
            vol += rect(411 + 5.45 * i, 1880 - h, 2.8, h, i === 6 || i === 17 ? GREEN : DRED);
        }
        $('volume').innerHTML = vol;

        // MACD 柱
        const macd = [0, 0, 11, 23, 46, 105, 122, 131, 131, 129, 119, 105, 88, 71, 54, 38, 23, 1, -7, -15, -20, -26, -30, -34, -38, -40, -41.5, -42.5, -43, -43,
            -42.5, -41.5, -41, -40, -38, -37, -35, -33.5, -32, -30.5, -28.5, -27, -26, -24, -22.5, -21.3, -20, -18.5, -17.5, -16.5, -15.3, -14.3, -13, -12,
            -11.3, -10.5, -10, -9.3, -8.6, -8, -7.3];
        while (macd.length < 110) macd.push(macd[macd.length - 1] * 0.93);
        $('macd').innerHTML = macd.map((v, i) => rect(411 + 5.45 * i, v > 0 ? 2117 - v : 2117, 2.8, Math.abs(v), v > 0 ? DRED : '#1b931b')).join('');

        function smooth(pts) {
            let d = `M${pts[0]}`;
            for (let i = 1; i < pts.length - 1; i++) {
                const m = [(pts[i][0] + pts[i + 1][0]) / 2, (pts[i][1] + pts[i + 1][1]) / 2];
                d += `Q${pts[i]} ${m}`;
            }
            return d + `L${pts[pts.length - 1]}`;
        }
        $('dif').setAttribute('d', smooth([[412, 2117], [418, 2117], [423, 2111], [429, 2100], [434.5, 2085], [440, 2040], [445, 2016], [451, 1993], [457, 1976], [462.500, 1961],
            [468, 1952], [474.5, 1947], [481, 1945], [487, 1947], [494, 1951], [499.5, 1956], [504, 1966], [514, 1975], [525, 1987], [549, 2016], [571, 2038], [590, 2055],
            [612, 2070], [637, 2082], [666, 2093], [697, 2102], [740, 2109], [782, 2113], [849, 2116], [960, 2117], [1721, 2117]]));
        $('dea').setAttribute('d', smooth([[412, 2117], [423, 2117], [429, 2113], [434.5, 2109], [440, 2097], [445, 2080], [450.5, 2062], [456, 2043], [461, 2027], [467, 2010],
            [472.500, 1997], [478, 1987], [485, 1978], [492, 1971], [498, 1968], [507, 1967], [516, 1969], [527, 1975], [543, 1987], [559, 2003], [576, 2021], [599, 2042],
            [617, 2055], [637, 2068], [661, 2080], [688, 2091], [715, 2099], [740, 2105], [768, 2109], [809, 2113], [862, 2115], [960, 2116.5], [1721, 2117]]));
    </script>
</body>
</html>
